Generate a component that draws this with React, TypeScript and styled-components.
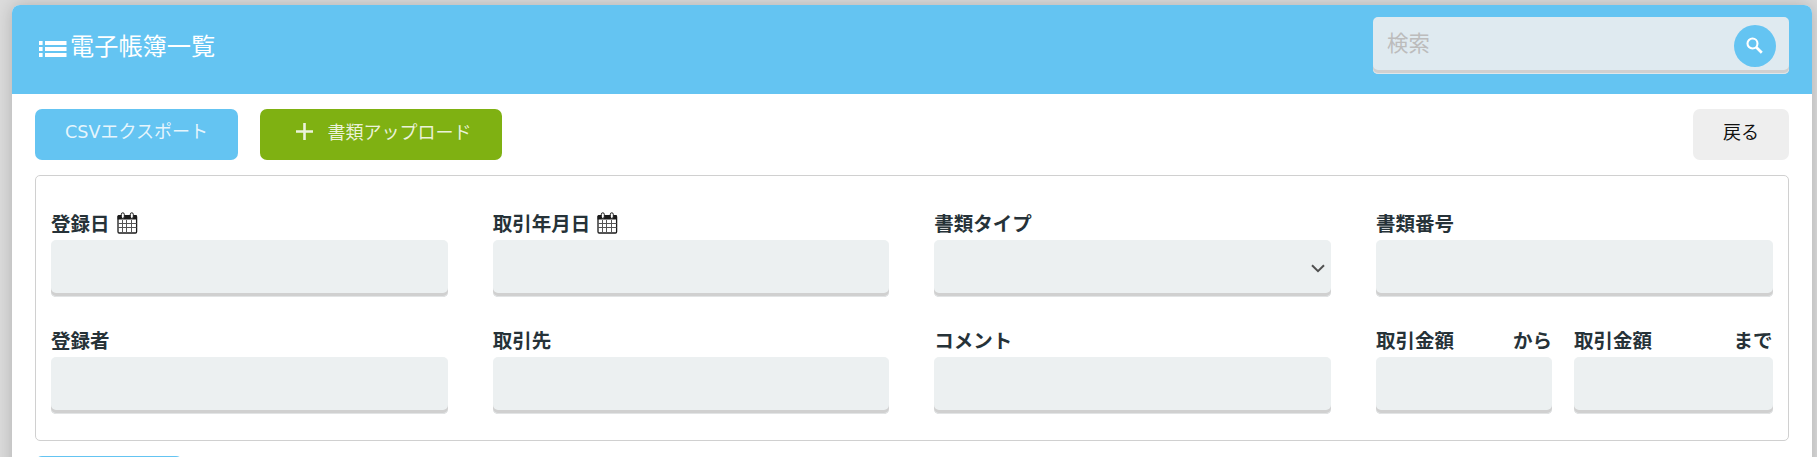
import React from "react";
import styled, { createGlobalStyle } from "styled-components";

const GlobalStyle = createGlobalStyle`
  * { box-sizing: border-box; }
  body {
    margin: 0;
    background: #dcdcdc;
    overflow: hidden;
    font-family: "Noto Sans CJK JP", sans-serif;
  }
  input, select, button { font-family: inherit; border: 0; outline: 0; margin: 0; }
`;

const Page = styled.div`
  height: 457px;
  overflow: hidden;
  padding: 5px 5px 0 12px;
`;

const Card = styled.main`
  height: 700px;
  background: #fff;
  border-radius: 8px;
  box-shadow: 0 0 18px rgba(0, 0, 0, 0.2);
`;

const Header = styled.header`
  display: flex;
  justify-content: space-between;
  align-items: flex-start;
  height: 89px;
  padding: 12px 23px 0 27px;
  background: #64c4f2;
  border-radius: 8px 8px 0 0;
`;

const Title = styled.h1`
  display: flex;
  align-items: center;
  gap: 3px;
  margin: 10px 0 0;
  color: #fff;
  font-size: 24.2px;
  font-weight: 400;
  line-height: 36px;
  svg { margin-top: 7px; }
`;

const SearchBox = styled.div`
  display: flex;
  align-items: flex-start;
  width: 416px;
  height: 57px;
  padding: 8px 13px 0 14px;
  border-radius: 5px;
  background: #dfeaf0;
  box-shadow: inset 0 -1px #dfe6ea, inset 0 -4px #d0d0d0;
`;

const SearchInput = styled.input`
  flex: 1;
  min-width: 0;
  height: 33px;
  padding: 0;
  background: transparent;
  font-size: 21.4px;
  font-weight: 400;
  &::placeholder { color: #bcbcbc; opacity: 1; }
`;

const SearchButton = styled.button`
  display: flex;
  align-items: center;
  justify-content: center;
  width: 42px;
  height: 42px;
  padding: 0 1px 2px 0;
  border-radius: 50%;
  background: #64c4f2;
  color: #fff;
`;

const Toolbar = styled.div`
  display: flex;
  gap: 22px;
  padding: 15px 23px;
`;

const Button = styled.button<{ $tone: "blue" | "green" | "gray"; $width: number }>`
  display: flex;
  align-items: center;
  justify-content: center;
  gap: 15px;
  width: ${(p) => p.$width}px;
  height: 51px;
  padding: ${(p) => (p.$tone === "green" ? "0 0 6px 5px" : "0 0 7px")};
  border-radius: 7px;
  font-size: 18px;
  font-weight: 400;
  line-height: 27px;
  white-space: nowrap;
  color: ${(p) => (p.$tone === "gray" ? "#111" : "rgba(255, 255, 255, 0.85)")};
  background: ${(p) => ({ blue: "#64c4f2", green: "#7fb112", gray: "#eee" })[p.$tone]};
`;

const Latin = styled.span`
  font-family: "DejaVu Sans", sans-serif;
  font-size: 17.6px;
`;

const BackButton = styled(Button)`
  margin-left: auto;
`;

const Filters = styled.section`
  display: grid;
  grid-template-columns: repeat(4, 1fr);
  column-gap: 45px;
  row-gap: 28px;
  height: 266px;
  margin: 0 23px 15px;
  padding: 32px 15.4px 0 15px;
  align-content: start;
  border: 1px solid #d0d0d0;
  border-radius: 5px;
`;

const Pair = styled.div`
  display: grid;
  grid-template-columns: 176px 1fr;
  gap: 22px;
`;

const FieldBox = styled.div`
  display: flex;
  flex-direction: column;
  min-width: 0;
`;

const Label = styled.label`
  display: flex;
  align-items: center;
  height: 32px;
  padding-bottom: 2px;
  color: #263238;
  font-size: 19.5px;
  font-weight: 700;
  line-height: 30px;
  white-space: nowrap;
  svg { margin-left: 7px; }
`;

const Suffix = styled.span`
  margin-left: auto;
`;

const Control = styled.input`
  width: 100%;
  height: 57px;
  padding: 0 14px;
  border-radius: 5px;
  background: #ecf0f1;
  box-shadow: inset 0 -1px #e2e4e5, inset 0 -4px #d0d0d0;
  font-size: 19px;
`;

const SelectBox = styled.div`
  display: flex;
  align-items: center;
  justify-content: flex-end;
  height: 57px;
  padding-right: 6px;
  border-radius: 5px;
  background: #ecf0f1;
  box-shadow: inset 0 -1px #e2e4e5, inset 0 -4px #d0d0d0;
`;

const SubmitButton = styled(Button)`
  margin-left: 23px;
`;

const ListIcon = () => (
  <svg width="28" height="16" viewBox="0 0 28 16" fill="#fff">
    {[0, 6, 12].map((y) => (
      <g key={y}>
        <rect x="0" y={y} width="3.6" height="4" />
        <rect x="6" y={y} width="21.5" height="4" />
      </g>
    ))}
  </svg>
);

const SearchIcon = () => (
  <svg width="17" height="17" viewBox="0 0 17 17" fill="none" stroke="currentColor">
    <circle cx="6.5" cy="6.5" r="5" strokeWidth="2.1" />
    <path d="M10 10l5.8 5.8" strokeWidth="2.7" />
  </svg>
);

const CalendarIcon = () => (
  <svg width="21" height="22" viewBox="0 0 21 22" fill="none">
    <rect x="1" y="3.6" width="18.6" height="17.4" rx="1.2" fill="#fff" stroke="#1b1b1b" strokeWidth="1.3" />
    <path d="M.6 7.6V4.3Q.6 3 2 3h16.6q1.4 0 1.4 1.3v3.3z" fill="#1b1b1b" />
    <path d="M5.5 8v13M9.5 8v13M14.5 8v13M1 11.5h18.6M1 15.5h18.6" stroke="#555" strokeWidth="1" />
    <rect x="4.3" y=".8" width="3" height="5.6" rx="1.5" fill="#fff" stroke="#1b1b1b" />
    <rect x="13.3" y=".8" width="3" height="5.6" rx="1.5" fill="#fff" stroke="#1b1b1b" />
  </svg>
);

const PlusIcon = () => (
  <svg width="17" height="17" viewBox="0 0 17 17" stroke="currentColor" strokeWidth="2.6">
    <path d="M8.5 0v17M0 8.5h17" />
  </svg>
);

const Chevron = () => (
  <svg width="14" height="9" viewBox="0 0 14 9" fill="none" stroke="#505050" strokeWidth="2">
    <path d="M1 1.2 7 7.2 13 1.2" />
  </svg>
);

type FieldProps = { label: string; suffix?: string; calendar?: boolean; select?: boolean };

const Field = ({ label, suffix, calendar, select }: FieldProps) => (
  <FieldBox>
    <Label>
      {label}
      {calendar && <CalendarIcon />}
      {suffix && <Suffix>{suffix}</Suffix>}
    </Label>
    {select ? (
      <SelectBox role="combobox" aria-label={label}>
        <Chevron />
      </SelectBox>
    ) : (
      <Control type="text" aria-label={label} />
    )}
  </FieldBox>
);

export default function App() {
  return (
    <Page>
      <GlobalStyle />
      <Card>
        <Header>
          <Title>
            <ListIcon />
            電子帳簿一覧
          </Title>
          <SearchBox>
            <SearchInput placeholder="検索" />
            <SearchButton>
              <SearchIcon />
            </SearchButton>
          </SearchBox>
        </Header>
        <Toolbar>
          <Button $tone="blue" $width={203}>
            <span>
              <Latin>CSV</Latin>エクスポート
            </span>
          </Button>
          <Button $tone="green" $width={242}>
            <PlusIcon />
            書類アップロード
          </Button>
          <BackButton $tone="gray" $width={96}>戻る</BackButton>
        </Toolbar>
        <Filters>
          <Field label="登録日" calendar />
          <Field label="取引年月日" calendar />
          <Field label="書類タイプ" select />
          <Field label="書類番号" />
          <Field label="登録者" />
          <Field label="取引先" />
          <Field label="コメント" />
          <Pair>
            <Field label="取引金額" suffix="から" />
            <Field label="取引金額" suffix="まで" />
          </Pair>
        </Filters>
        <SubmitButton $tone="blue" $width={148} />
      </Card>
    </Page>
  );
}
